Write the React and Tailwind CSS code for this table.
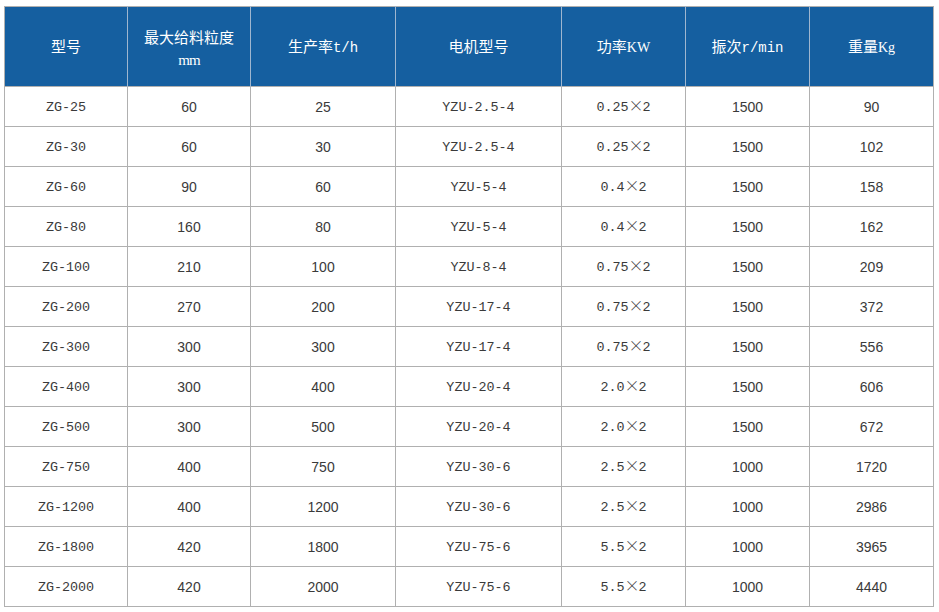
const rows = [
  ['ZG-25', '60', '25', 'YZU-2.5-4', '0.25×2', '1500', '90'],
  ['ZG-30', '60', '30', 'YZU-2.5-4', '0.25×2', '1500', '102'],
  ['ZG-60', '90', '60', 'YZU-5-4', '0.4×2', '1500', '158'],
  ['ZG-80', '160', '80', 'YZU-5-4', '0.4×2', '1500', '162'],
  ['ZG-100', '210', '100', 'YZU-8-4', '0.75×2', '1500', '209'],
  ['ZG-200', '270', '200', 'YZU-17-4', '0.75×2', '1500', '372'],
  ['ZG-300', '300', '300', 'YZU-17-4', '0.75×2', '1500', '556'],
  ['ZG-400', '300', '400', 'YZU-20-4', '2.0×2', '1500', '606'],
  ['ZG-500', '300', '500', 'YZU-20-4', '2.0×2', '1500', '672'],
  ['ZG-750', '400', '750', 'YZU-30-6', '2.5×2', '1000', '1720'],
  ['ZG-1200', '400', '1200', 'YZU-30-6', '2.5×2', '1000', '2986'],
  ['ZG-1800', '420', '1800', 'YZU-75-6', '5.5×2', '1000', '3965'],
  ['ZG-2000', '420', '2000', 'YZU-75-6', '5.5×2', '1000', '4440'],
];

const widths = [123, 123, 145, 166, 124, 124, 124];

// columns with the mono look (model names, power)
const monoCols = [0, 3, 4];

const mono = 'font-["Liberation_Mono","Noto_Sans_CJK_SC",monospace] text-[13.4px] pt-[3px]';
const sans = 'font-["Liberation_Sans","Noto_Sans_CJK_SC",sans-serif] text-[14px] pt-[1px]';
const head = 'font-["Noto_Sans_CJK_SC","Liberation_Mono",sans-serif] text-[15px] font-normal';

function Power({ value }) {
  const [a, b] = value.split('×');
  return (
    <>
      {a}
      <span className="inline-block w-[14px] text-center font-['Noto_Sans_CJK_SC',sans-serif] text-[15px] font-light leading-none">
        ×
      </span>
      {b}
    </>
  );
}

function HeadCell({ children, last }) {
  return (
    <th
      className={`h-[80px] bg-[#155fa0] text-white text-center align-middle p-0 border-t border-t-[#b0b0b0] ${
        last ? 'border-r border-r-[#b0b0b0]' : 'border-r border-r-[#9fb6cf]'
      } ${head}`}
    >
      {children}
    </th>
  );
}

export default function App() {
  return (
    <div className="bg-white w-[939px] h-[612px] pt-[6px] pl-[4px]">
      <table className="border-collapse table-fixed border-l border-[#b0b0b0]" style={{ width: 930 }}>
        <colgroup>
          {widths.map((w, i) => (
            <col key={i} style={{ width: w }} />
          ))}
        </colgroup>
        <thead>
          <tr>
            <HeadCell>型号</HeadCell>
            <HeadCell>
              <div className="leading-[20px] pt-[1px]">最大给料粒度</div>
              <div className="mt-[6px] text-[15px] leading-[14px] font-['Liberation_Serif',serif] tracking-[-1px]">mm</div>
            </HeadCell>
            <HeadCell>
              生产率<span className="font-['Liberation_Mono',monospace] text-[14px]">t/h</span>
            </HeadCell>
            <HeadCell>电机型号</HeadCell>
            <HeadCell>
              功率<span className="font-['Liberation_Serif',serif] text-[14px]">KW</span>
            </HeadCell>
            <HeadCell>
              振次<span className="font-['Liberation_Mono',monospace] text-[14px]">r/min</span>
            </HeadCell>
            <HeadCell last>
              重量<span className="font-['Liberation_Serif',serif] text-[14px]">Kg</span>
            </HeadCell>
          </tr>
        </thead>
        <tbody>
          {rows.map((r) => (
            <tr key={r[0]}>
              {r.map((c, i) => (
                <td
                  key={i}
                  className={`h-[40px] p-0 text-center align-middle text-[#3a3a3a] border border-[#b0b0b0] ${
                    monoCols.includes(i) ? mono : sans
                  }`}
                >
                  {i === 4 ? <Power value={c} /> : c}
                </td>
              ))}
            </tr>
          ))}
        </tbody>
      </table>
    </div>
  );
}
